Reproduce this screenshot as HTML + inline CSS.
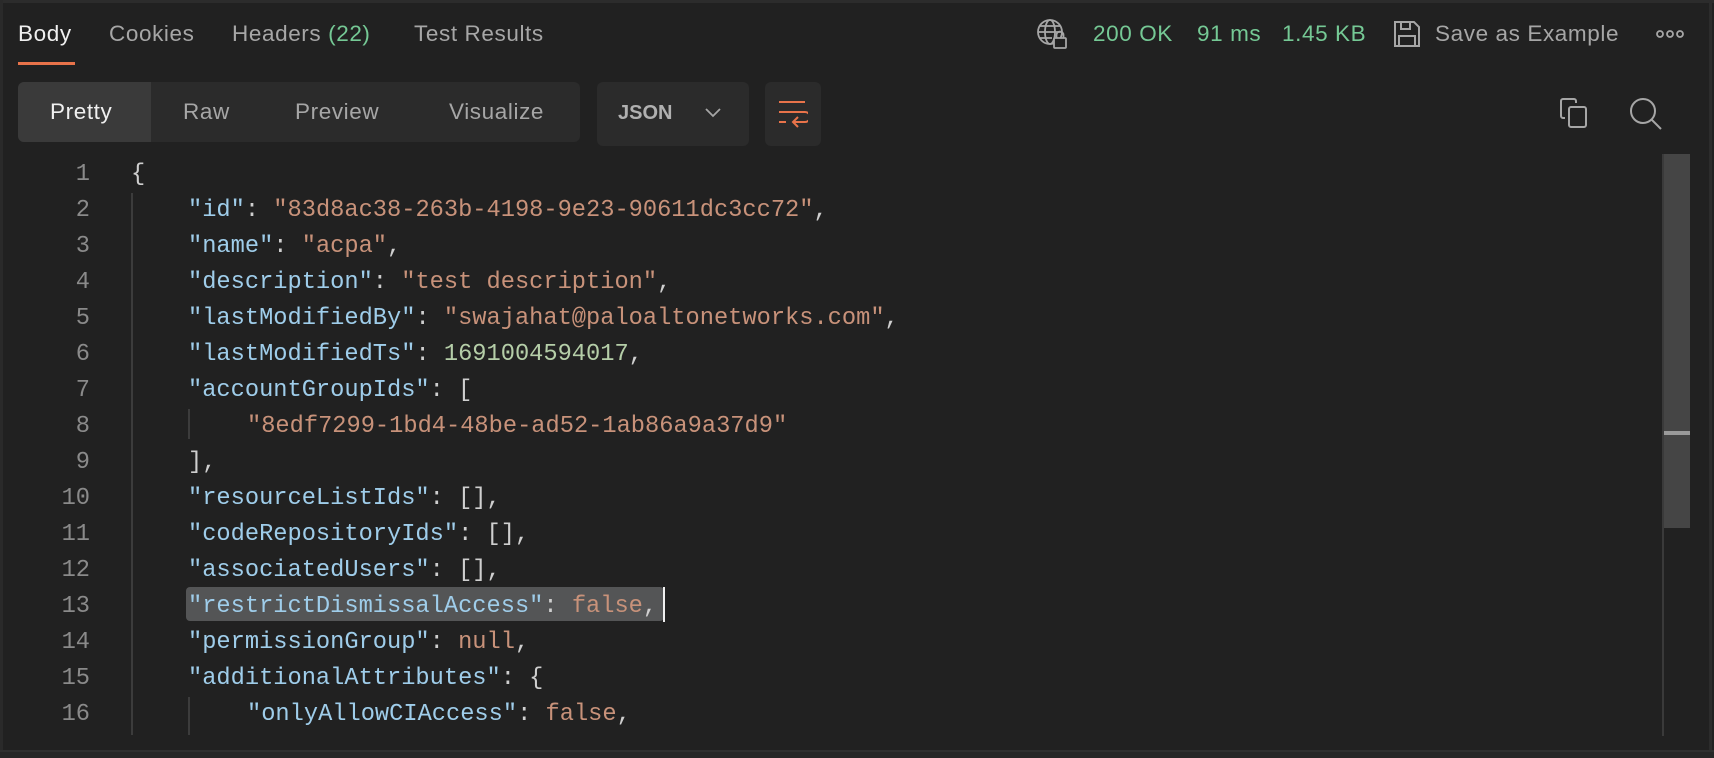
<!DOCTYPE html>
<html><head><meta charset="utf-8"><style>
*{margin:0;padding:0;box-sizing:border-box}
html,body{width:1714px;height:758px;overflow:hidden}
body{background:#212121;position:relative;font-family:"Liberation Sans",sans-serif;color:#a6a6a6}
.a{position:absolute;white-space:pre}
.tab{font-size:22.5px;top:21px;letter-spacing:0.6px}
.code{position:absolute;font-family:"Liberation Mono","DejaVu Sans Mono",monospace;font-size:23.7px;line-height:36px}
.row{position:relative;height:36px}
.ln{position:absolute;left:30px;width:60px;text-align:right;color:#8a8a8a}
.k{color:#9fcdea}.s{color:#c8927a}.n{color:#b5cea8}.p{color:#cfcfcf}
</style></head><body>
<div style="position:absolute;left:0;top:0;width:1714px;height:3px;background:#2c2c2c"></div>
<div style="position:absolute;left:0;top:0;width:3px;height:758px;background:#2a2a2a"></div>
<div style="position:absolute;left:1709px;top:0;width:3px;height:752px;background:#2c2c2c"></div>
<div style="position:absolute;left:0;top:750px;width:1714px;height:8px;background:#262626;border-top:2px solid #2f2f2f"></div>

<div class="a tab" style="left:18px;color:#f0f0f0">Body</div>
<div style="position:absolute;left:18px;top:62px;width:57px;height:3px;background:#e8734a"></div>
<div class="a tab" style="left:109px">Cookies</div>
<div class="a tab" style="left:232px">Headers <span style="color:#75c995">(22)</span></div>
<div class="a tab" style="left:414px">Test Results</div>

<svg class="a" style="left:1036px;top:18px" width="34" height="32" viewBox="0 0 34 32" fill="none" stroke="#a6a6a6" stroke-width="1.8"><circle cx="14" cy="14" r="12"/><ellipse cx="14" cy="14" rx="5" ry="12"/><path d="M2 14h24M4 8h20M4 20h12"/><rect x="18" y="20" width="12" height="10" rx="1" fill="#212121"/><path d="M20.5 20v-3a3.5 3.5 0 0 1 7 0v3"/></svg>
<div class="a tab" style="left:1093px;color:#75c995">200 OK</div>
<div class="a tab" style="left:1197px;color:#75c995">91 ms</div>
<div class="a tab" style="left:1282px;color:#75c995">1.45 KB</div>
<svg class="a" style="left:1393px;top:20px" width="28" height="28" viewBox="0 0 28 28" fill="none" stroke="#a6a6a6" stroke-width="2"><path d="M2 2h19l5 5v19H2z"/><path d="M8 2v7h9V2M6 26V16h16v10"/></svg>
<div class="a tab" style="left:1435px">Save as Example</div>
<svg class="a" style="left:1656px;top:30px" width="28" height="8"><g fill="none" stroke="#a6a6a6" stroke-width="1.8"><circle cx="4" cy="4" r="3"/><circle cx="14" cy="4" r="3"/><circle cx="24" cy="4" r="3"/></g></svg>

<div style="position:absolute;left:18px;top:82px;width:562px;height:60px;background:#2b2b2b;border-radius:6px;overflow:hidden">
<div style="position:absolute;left:0;top:0;width:133px;height:60px;background:#3a3a3a"></div></div>
<div class="a tab" style="left:50px;top:99px;color:#f0f0f0">Pretty</div>
<div class="a tab" style="left:183px;top:99px">Raw</div>
<div class="a tab" style="left:295px;top:99px">Preview</div>
<div class="a tab" style="left:449px;top:99px">Visualize</div>
<div style="position:absolute;left:597px;top:82px;width:152px;height:64px;background:#2b2b2b;border-radius:6px"></div>
<div class="a" style="left:618px;top:102px;font-size:20px;font-weight:bold;color:#b0b0b0">JSON</div>
<svg class="a" style="left:704px;top:107px" width="18" height="12"><path d="M2 2l7 7 7-7" fill="none" stroke="#a6a6a6" stroke-width="1.8"/></svg>
<div style="position:absolute;left:765px;top:82px;width:56px;height:64px;background:#2b2b2b;border-radius:6px"></div>
<svg class="a" style="left:778px;top:100px" width="30" height="28" fill="none" stroke="#e8734a" stroke-width="2"><path d="M1 2h26M1 12h26a5 5 0 0 1 0 10H16M20 17l-5 5 5 5M1 22h7"/></svg>
<svg class="a" style="left:1560px;top:98px" width="28" height="30" fill="none" stroke="#a6a6a6" stroke-width="2"><path d="M5 20H3a2 2 0 0 1-2-2V3a2 2 0 0 1 2-2h11a2 2 0 0 1 2 2v2"/><rect x="9" y="9" width="17" height="20" rx="2"/></svg>
<svg class="a" style="left:1629px;top:97px" width="34" height="34" fill="none" stroke="#a6a6a6" stroke-width="2"><circle cx="14" cy="14" r="12"/><path d="M23 23l9 9"/></svg>

<div style="position:absolute;left:1662px;top:154px;width:28px;height:374px;background:#454545"></div>
<div style="position:absolute;left:1662px;top:154px;width:2px;height:582px;background:#3a3a3a"></div>
<div style="position:absolute;left:1664px;top:431px;width:26px;height:4px;background:#9a9a9a"></div>

<div style="position:absolute;left:131px;top:193px;width:2px;height:542px;background:#3c3c3c"></div>
<div style="position:absolute;left:188px;top:409px;width:2px;height:30px;background:#3c3c3c"></div>
<div style="position:absolute;left:188px;top:697px;width:2px;height:38px;background:#3c3c3c"></div>
<div style="position:absolute;left:186px;top:587px;width:478px;height:34px;background:#545556;border-radius:4px"></div>
<div style="position:absolute;left:663px;top:587px;width:2px;height:35px;background:#f0f0f0"></div>

<div class="code" style="left:0;top:157px;width:1650px"><div class="row"><span class="ln">1</span><span class="a p" style="left:131px">{</span></div><div class="row"><span class="ln">2</span><span class="a" style="left:188px"><span class="k">"id"</span><span class="p">: </span><span class="s">"83d8ac38-263b-4198-9e23-90611dc3cc72"</span><span class="p">,</span></span></div><div class="row"><span class="ln">3</span><span class="a" style="left:188px"><span class="k">"name"</span><span class="p">: </span><span class="s">"acpa"</span><span class="p">,</span></span></div><div class="row"><span class="ln">4</span><span class="a" style="left:188px"><span class="k">"description"</span><span class="p">: </span><span class="s">"test description"</span><span class="p">,</span></span></div><div class="row"><span class="ln">5</span><span class="a" style="left:188px"><span class="k">"lastModifiedBy"</span><span class="p">: </span><span class="s">"swajahat@paloaltonetworks.com"</span><span class="p">,</span></span></div><div class="row"><span class="ln">6</span><span class="a" style="left:188px"><span class="k">"lastModifiedTs"</span><span class="p">: </span><span class="n">1691004594017</span><span class="p">,</span></span></div><div class="row"><span class="ln">7</span><span class="a" style="left:188px"><span class="k">"accountGroupIds"</span><span class="p">: [</span></span></div><div class="row"><span class="ln">8</span><span class="a" style="left:247px"><span class="s">"8edf7299-1bd4-48be-ad52-1ab86a9a37d9"</span></span></div><div class="row"><span class="ln">9</span><span class="a p" style="left:188px">],</span></div><div class="row"><span class="ln">10</span><span class="a" style="left:188px"><span class="k">"resourceListIds"</span><span class="p">: [],</span></span></div><div class="row"><span class="ln">11</span><span class="a" style="left:188px"><span class="k">"codeRepositoryIds"</span><span class="p">: [],</span></span></div><div class="row"><span class="ln">12</span><span class="a" style="left:188px"><span class="k">"associatedUsers"</span><span class="p">: [],</span></span></div><div class="row"><span class="ln">13</span><span class="a" style="left:188px"><span class="k">"restrictDismissalAccess"</span><span class="p">: </span><span class="s">false</span><span class="p">,</span></span></div><div class="row"><span class="ln">14</span><span class="a" style="left:188px"><span class="k">"permissionGroup"</span><span class="p">: </span><span class="s">null</span><span class="p">,</span></span></div><div class="row"><span class="ln">15</span><span class="a" style="left:188px"><span class="k">"additionalAttributes"</span><span class="p">: {</span></span></div><div class="row"><span class="ln">16</span><span class="a" style="left:247px"><span class="k">"onlyAllowCIAccess"</span><span class="p">: </span><span class="s">false</span><span class="p">,</span></span></div></div>
</body></html>
